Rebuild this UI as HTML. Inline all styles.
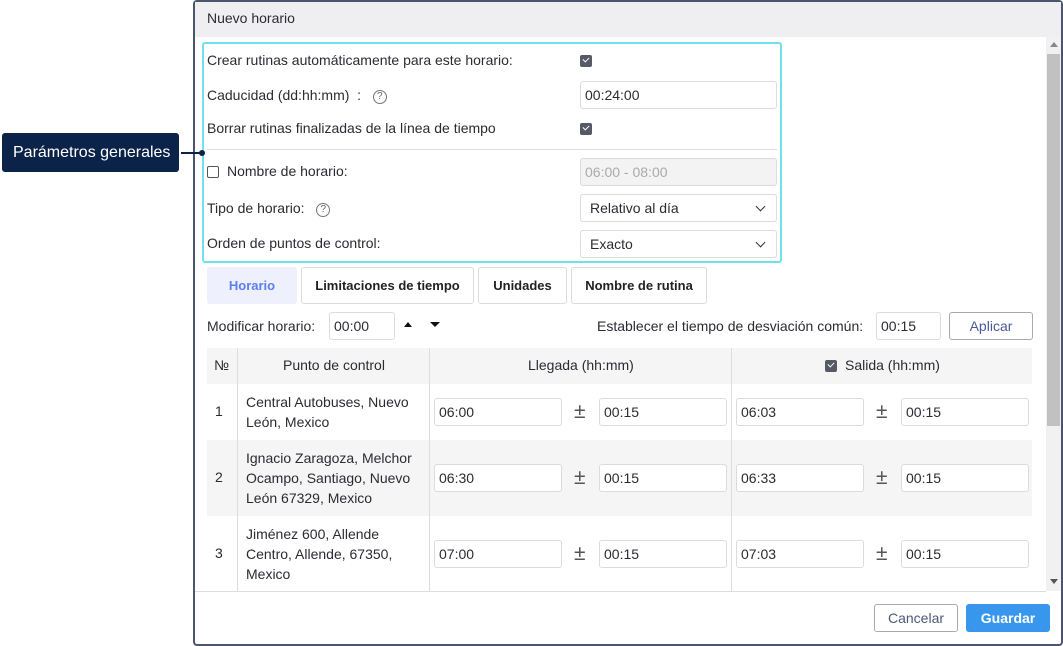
<!DOCTYPE html><html><head><style>
*{box-sizing:border-box;margin:0;padding:0}
body{width:1063px;height:646px;background:#fff;font-family:"Liberation Sans",sans-serif;font-size:14px;color:#2b2b33;position:relative;overflow:hidden}
.a{position:absolute}
.inp{position:absolute;border:1px solid #dcdcdc;border-radius:3px;background:#fff;height:28px;line-height:26px;padding-left:4px;font-size:14px}
.cb{position:absolute;width:12px;height:12px;background:#555a66;border-radius:2px}
.cb:after{content:"";position:absolute;left:3px;top:2px;width:5px;height:3px;border-left:1.5px solid #fff;border-bottom:1.5px solid #fff;transform:rotate(-45deg)}
.q{display:inline-block;width:14px;height:14px;border:1px solid #777;border-radius:50%;font-size:10px;line-height:12px;text-align:center;color:#666;vertical-align:1px}
.tab{position:absolute;top:267px;height:37px;border:1px solid #dcdcdc;border-radius:3px;line-height:35px;text-align:center;font-weight:bold;font-size:13px;color:#222}
.pm{position:absolute;font-size:21px;color:#555;line-height:20px}
.chev{position:absolute;width:7px;height:7px;border-right:1.5px solid #333;border-bottom:1.5px solid #333;transform:rotate(45deg)}
</style></head><body>
<div class="a" style="left:193px;top:0;width:870px;height:646px;border:2px solid #4b566e;border-radius:4px;background:#fff"></div>
<div class="a" style="left:195px;top:2px;width:866px;height:35px;background:#efeff1"></div>
<div class="a" style="left:207px;top:10px">Nuevo horario</div>
<div class="a" style="left:1046px;top:37px;width:15px;height:554px;background:#f1f1f1"></div>
<div class="a" style="left:1047px;top:54px;width:13px;height:372px;background:#c1c1c1"></div>
<div class="a" style="left:1050px;top:42px;border:4px solid transparent;border-bottom:5px solid #888;border-top:0"></div>
<div class="a" style="left:1050px;top:579px;border:4px solid transparent;border-top:5px solid #555;border-bottom:0"></div>

<div class="a" style="left:202px;top:42px;width:580px;height:221px;border:2px solid #6fe1ec;border-radius:3px"></div>
<div class="a" style="left:207px;top:52px">Crear rutinas automáticamente para este horario:</div>
<div class="cb" style="left:580px;top:55px"></div>
<div class="a" style="left:207px;top:87px">Caducidad (dd:hh:mm) &nbsp;: &nbsp;&nbsp;<span class="q">?</span></div>
<div class="inp" style="left:580px;top:81px;width:197px">00:24:00</div>
<div class="a" style="left:207px;top:120px">Borrar rutinas finalizadas de la línea de tiempo</div>
<div class="cb" style="left:580px;top:123px"></div>
<div class="a" style="left:207px;top:149px;width:570px;height:1px;background:#ddd"></div>
<div class="a" style="left:207px;top:166px;width:12px;height:12px;border:1px solid #555;border-radius:2px"></div>
<div class="a" style="left:227px;top:163px">Nombre de horario:</div>
<div class="inp" style="left:580px;top:158px;width:197px;background:#f3f3f3;color:#aaa">06:00 - 08:00</div>
<div class="a" style="left:207px;top:200px">Tipo de horario: &nbsp;&nbsp;<span class="q">?</span></div>
<div class="inp" style="left:580px;top:194px;width:197px;padding-left:9px">Relativo al día</div>
<div class="chev" style="left:757px;top:203px"></div>
<div class="a" style="left:207px;top:235px">Orden de puntos de control:</div>
<div class="inp" style="left:580px;top:230px;width:197px;padding-left:9px">Exacto</div>
<div class="chev" style="left:757px;top:239px"></div>

<div class="a" style="left:2px;top:133px;width:177px;height:39px;background:#0c2349;border-radius:3px;color:#fff;font-size:16px;line-height:39px;padding-left:11px">Parámetros generales</div>
<div class="a" style="left:181px;top:152px;width:20px;height:2px;background:#0c2349"></div>
<div class="a" style="left:199px;top:150px;width:6px;height:6px;background:#0c2349;border-radius:50%"></div>

<div class="tab" style="left:207px;width:90px;border-color:#eef1fd;background:#eef1fd;color:#5b7ef0">Horario</div>
<div class="tab" style="left:301px;width:173px">Limitaciones de tiempo</div>
<div class="tab" style="left:478px;width:89px">Unidades</div>
<div class="tab" style="left:571px;width:136px">Nombre de rutina</div>

<div class="a" style="left:207px;top:318px">Modificar horario:</div>
<div class="inp" style="left:329px;top:312px;width:66px">00:00</div>
<div class="a" style="left:404px;top:322px;border:4px solid transparent;border-bottom:5px solid #111;border-top:0"></div>
<div class="a" style="left:430px;top:322px;border:5px solid transparent;border-top:5px solid #111;border-bottom:0"></div>
<div class="a" style="left:597px;top:318px">Establecer el tiempo de desviación común:</div>
<div class="inp" style="left:876px;top:312px;width:65px">00:15</div>
<div class="a" style="left:949px;top:312px;width:84px;height:28px;border:1px solid #aaa;border-radius:3px;text-align:center;line-height:26px;color:#4a5a9a">Aplicar</div>

<div class="a" style="left:207px;top:348px;width:825px;height:36px;background:#f5f5f5"></div>
<div class="a" style="left:207px;top:440px;width:825px;height:76px;background:#f5f5f5"></div>
<div class="a" style="left:237px;top:348px;width:1px;height:243px;background:#ddd"></div>
<div class="a" style="left:429px;top:348px;width:1px;height:243px;background:#ddd"></div>
<div class="a" style="left:731px;top:348px;width:1px;height:243px;background:#ddd"></div>
<div class="a" style="left:195px;top:591px;width:851px;height:1px;background:#ddd"></div>
<div class="a" style="left:214px;top:357px">№</div>
<div class="a" style="left:283px;top:357px">Punto de control</div>
<div class="a" style="left:528px;top:357px">Llegada (hh:mm)</div>
<div class="cb" style="left:825px;top:360px"></div>
<div class="a" style="left:845px;top:357px">Salida (hh:mm)</div>

<div class="a" style="left:215px;top:403px">1</div>
<div class="a" style="left:246px;top:392px;line-height:20px">Central Autobuses, Nuevo<br>León, Mexico</div>
<div class="a" style="left:215px;top:469px">2</div>
<div class="a" style="left:246px;top:448px;line-height:20px">Ignacio Zaragoza, Melchor<br>Ocampo, Santiago, Nuevo<br>León 67329, Mexico</div>
<div class="a" style="left:215px;top:545px">3</div>
<div class="a" style="left:246px;top:524px;line-height:20px">Jiménez 600, Allende<br>Centro, Allende, 67350,<br>Mexico</div>

<div class="inp" style="left:434px;top:398px;width:128px">06:00</div><div class="pm" style="left:574px;top:402px">±</div><div class="inp" style="left:599px;top:398px;width:128px">00:15</div>
<div class="inp" style="left:736px;top:398px;width:128px">06:03</div><div class="pm" style="left:876px;top:402px">±</div><div class="inp" style="left:901px;top:398px;width:128px">00:15</div>
<div class="inp" style="left:434px;top:464px;width:128px">06:30</div><div class="pm" style="left:574px;top:468px">±</div><div class="inp" style="left:599px;top:464px;width:128px">00:15</div>
<div class="inp" style="left:736px;top:464px;width:128px">06:33</div><div class="pm" style="left:876px;top:468px">±</div><div class="inp" style="left:901px;top:464px;width:128px">00:15</div>
<div class="inp" style="left:434px;top:540px;width:128px">07:00</div><div class="pm" style="left:574px;top:544px">±</div><div class="inp" style="left:599px;top:540px;width:128px">00:15</div>
<div class="inp" style="left:736px;top:540px;width:128px">07:03</div><div class="pm" style="left:876px;top:544px">±</div><div class="inp" style="left:901px;top:540px;width:128px">00:15</div>

<div class="a" style="left:874px;top:604px;width:84px;height:28px;border:1px solid #aaa;border-radius:3px;text-align:center;line-height:26px;color:#4a5a7a">Cancelar</div>
<div class="a" style="left:966px;top:604px;width:84px;height:28px;background:#3897ec;border-radius:3px;text-align:center;line-height:28px;color:#fff;font-weight:bold">Guardar</div>
</body></html>
